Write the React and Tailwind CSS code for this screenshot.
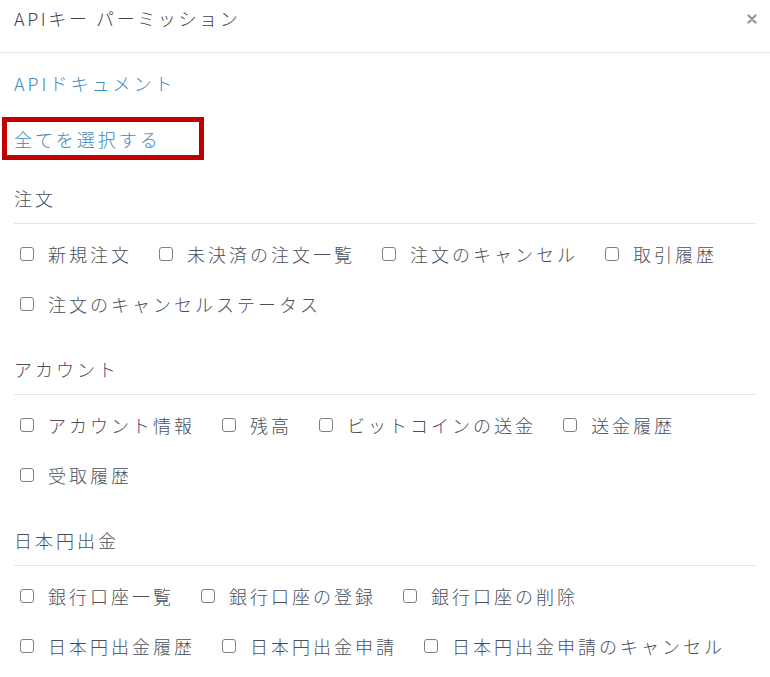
import React from "react";

const sections = [
  {
    title: "注文",
    rows: [
      ["新規注文", "未決済の注文一覧", "注文のキャンセル", "取引履歴"],
      ["注文のキャンセルステータス"],
    ],
  },
  {
    title: "アカウント",
    rows: [
      ["アカウント情報", "残高", "ビットコインの送金", "送金履歴"],
      ["受取履歴"],
    ],
  },
  {
    title: "日本円出金",
    rows: [
      ["銀行口座一覧", "銀行口座の登録", "銀行口座の削除"],
      ["日本円出金履歴", "日本円出金申請", "日本円出金申請のキャンセル"],
    ],
  },
];

const Check = ({ label }) => (
  <label className="flex items-center h-[26px] mr-[21px] cursor-pointer">
    <span className="ml-[6px] mr-[14px] w-[14px] h-[14px] rounded-[3px] border border-[#808080] bg-white shrink-0" />
    <span className="tracking-[3px]">{label}</span>
  </label>
);

export default function App() {
  return (
    <div
      className="w-[770px] min-h-[677px] bg-white text-[#4a4f5c] text-[18px] leading-[26px] font-light"
      style={{ fontFamily: '"Noto Sans CJK JP", "Noto Sans", sans-serif' }}
    >
      <div className="h-[53px] border-b border-[#e4e4e4] flex items-start justify-between pl-[14px] pr-[13px] pt-[5px]">
        <h1 className="tracking-[2.6px] text-[#3f4451]">APIキー パーミッション</h1>
        <button type="button" className="text-[#8c93a3] mt-[9px]" aria-label="閉じる">
          <svg width="10" height="10" viewBox="0 0 10 10">
            <path d="M1.5 1.5 L8.5 8.5 M8.5 1.5 L1.5 8.5" stroke="currentColor" strokeWidth="2.2" strokeLinecap="round" />
          </svg>
        </button>
      </div>

      <div className="px-[14px]">
        <a href="#" className="block mt-[17px] text-[#3b8ac1] tracking-[3px]">
          APIドキュメント
        </a>

        <div className="mt-[21px] ml-[-12px] w-[202px] h-[43px] border-[5px] border-[#c00000] pl-[7px] flex items-center">
          <a href="#" className="text-[#3b8ac1] tracking-[3px]">
            全てを選択する
          </a>
        </div>

        {sections.map((s, i) => (
          <section key={s.title} className={i === 0 ? "mt-[25px]" : "mt-[39px]"}>
            <h2 className="pb-[12px] border-b border-[#e6e6e6] tracking-[3px]">{s.title}</h2>
            <div className="mt-[17px] flex flex-col gap-[24px]">
              {s.rows.map((row, j) => (
                <div key={j} className="flex">
                  {row.map((label) => (
                    <Check key={label} label={label} />
                  ))}
                </div>
              ))}
            </div>
          </section>
        ))}
      </div>
    </div>
  );
}
